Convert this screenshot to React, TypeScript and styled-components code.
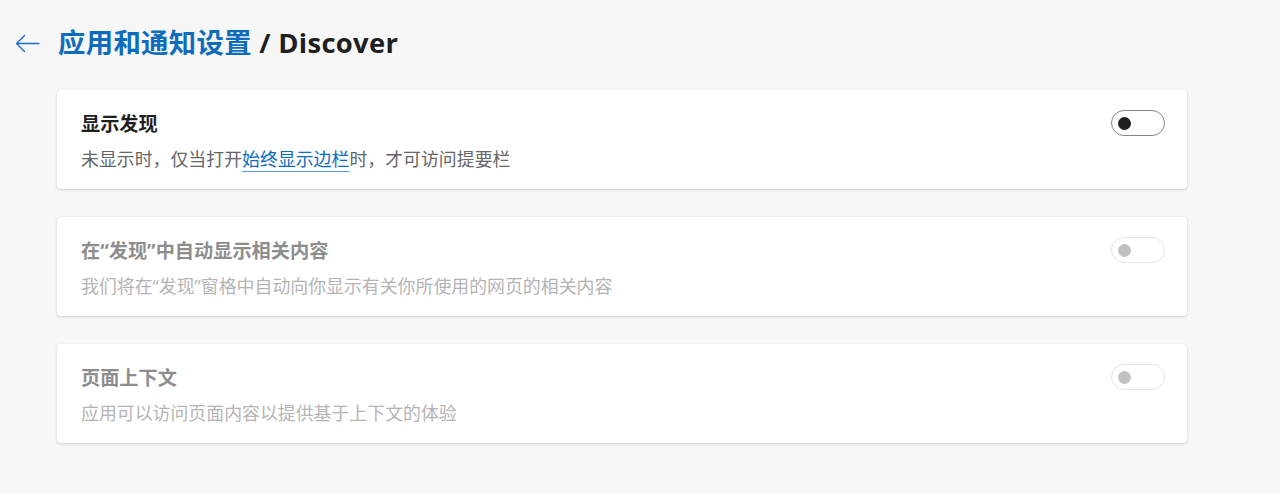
import React from "react";
import styled, { createGlobalStyle } from "styled-components";

const Global = createGlobalStyle`
  html, body { margin: 0; padding: 0; background: #f7f7f7; }
  body { font-family: "Open Sans", "Noto Sans CJK SC", sans-serif; }
`;

const Page = styled.div`
  width: 1280px;
  height: 493px;
  background: #f7f7f7;
  box-sizing: border-box;
  padding-top: 26px;
`;

const Header = styled.div`
  display: flex;
  align-items: center;
  padding-left: 14px;
  height: 34px;
`;

const BackButton = styled.button`
  display: flex;
  align-items: center;
  justify-content: center;
  width: 26px;
  height: 26px;
  padding: 0;
  border: none;
  background: transparent;
  margin-right: 18px;
  cursor: pointer;
`;

const Title = styled.h1`
  margin: 0;
  font-family: "Open Sans", "Noto Sans CJK SC", sans-serif;
  font-size: 27.4px;
  font-weight: 700;
  line-height: 34px;
  color: #1f1f1f;
  letter-spacing: 0.3px;
`;

const Crumb = styled.span`
  color: #0f6cbd;
`;

const List = styled.div`
  display: flex;
  flex-direction: column;
  gap: 28px;
  margin: 30px 0 0 57px;
  width: 1130px;
`;

const Card = styled.div`
  display: flex;
  align-items: flex-start;
  justify-content: space-between;
  height: 99px;
  box-sizing: border-box;
  padding: 20px 22px 16px 24px;
  background: #ffffff;
  border-radius: 4px;
  box-shadow: 0 1px 3px rgba(0, 0, 0, 0.16), 0 0 1px rgba(0, 0, 0, 0.08);
`;

const Texts = styled.div`
  display: flex;
  flex-direction: column;
  gap: 7px;
`;

const CardTitle = styled.div<{ $disabled?: boolean }>`
  font-family: "Open Sans", "Noto Sans CJK SC", sans-serif;
  font-size: 19.2px;
  font-weight: 700;
  line-height: 28px;
  color: ${(p) => (p.$disabled ? "#8d8d8d" : "#1f1f1f")};
`;

const CardDesc = styled.div<{ $disabled?: boolean }>`
  font-family: "Open Sans", "Noto Sans CJK SC", sans-serif;
  font-size: 17.9px;
  font-weight: 400;
  line-height: 28px;
  color: ${(p) => (p.$disabled ? "#b4b4b4" : "#666666")};
`;

const Link = styled.a`
  color: #0f6cbd;
  text-decoration: underline;
  text-decoration-color: #5a9bd6;
  text-underline-offset: 5px;
  text-decoration-thickness: 1px;
`;

const Toggle = styled.div<{ $disabled?: boolean }>`
  display: flex;
  align-items: center;
  width: 54px;
  height: 26px;
  box-sizing: border-box;
  padding-left: 6px;
  border-radius: 13px;
  border: 1px solid ${(p) => (p.$disabled ? "#e3e3e3" : "#858585")};
  background: #ffffff;
`;

const Knob = styled.span<{ $disabled?: boolean }>`
  width: 13px;
  height: 13px;
  border-radius: 50%;
  background: ${(p) => (p.$disabled ? "#c2c2c2" : "#1f1f1f")};
`;

const items = [
  {
    title: "显示发现",
    desc: (
      <>
        未显示时，仅当打开<Link>始终显示边栏</Link>时，才可访问提要栏
      </>
    ),
    disabled: false,
  },
  {
    title: "在“发现”中自动显示相关内容",
    desc: "我们将在“发现”窗格中自动向你显示有关你所使用的网页的相关内容",
    disabled: true,
  },
  {
    title: "页面上下文",
    desc: "应用可以访问页面内容以提供基于上下文的体验",
    disabled: true,
  },
];

export default function App() {
  return (
    <Page>
      <Global />
      <Header>
        <BackButton aria-label="back">
          <svg width="25" height="19" viewBox="0 0 25 19" fill="none">
            <path
              d="M24 9.5H1.5M9.5 1.5L1.5 9.5L9.5 17.5"
              stroke="#1a6fc4"
              strokeWidth="1.4"
              strokeLinecap="round"
              strokeLinejoin="round"
            />
          </svg>
        </BackButton>
        <Title>
          <Crumb>应用和通知设置</Crumb> / Discover
        </Title>
      </Header>
      <List>
        {items.map((it, i) => (
          <Card key={i}>
            <Texts>
              <CardTitle $disabled={it.disabled}>{it.title}</CardTitle>
              <CardDesc $disabled={it.disabled}>{it.desc}</CardDesc>
            </Texts>
            <Toggle $disabled={it.disabled}>
              <Knob $disabled={it.disabled} />
            </Toggle>
          </Card>
        ))}
      </List>
    </Page>
  );
}
